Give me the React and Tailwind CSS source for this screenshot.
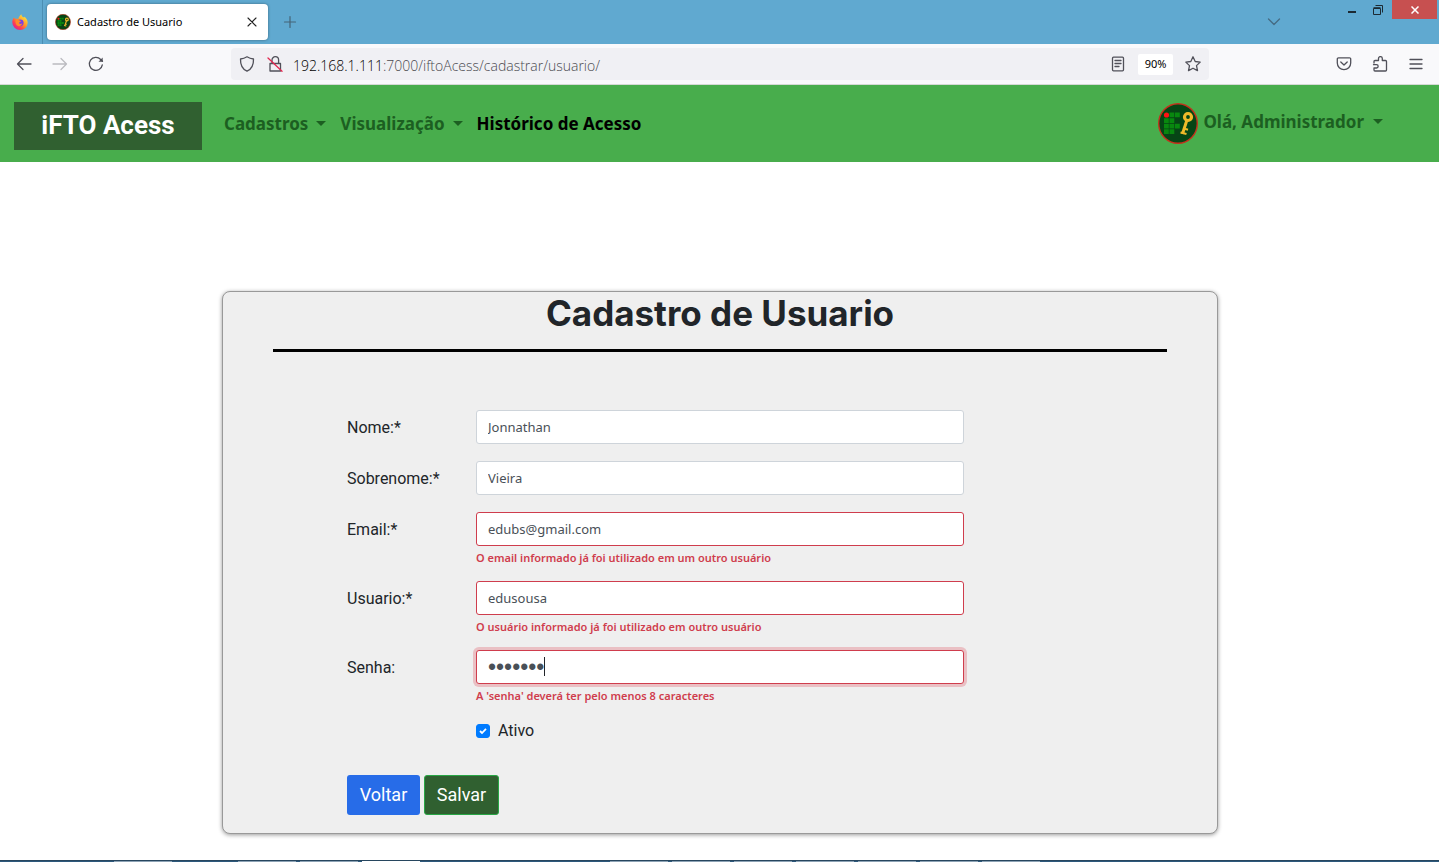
const fields = [
  { id: "nome", label: "Nome:*", value: "Jonnathan", type: "text" },
  { id: "sobrenome", label: "Sobrenome:*", value: "Vieira", type: "text" },
  { id: "email", label: "Email:*", value: "edubs@gmail.com", type: "email", error: "O email informado já foi utilizado em um outro usuário" },
  { id: "usuario", label: "Usuario:*", value: "edusousa", type: "text", error: "O usuário informado já foi utilizado em outro usuário" },
  { id: "senha", label: "Senha:", value: "abcdefg", type: "password", error: "A 'senha' deverá ter pelo menos 8 caracteres", focused: true },
];

const taskbar = [
  "w-[114px]",
  "w-[58px] bg-[#8da3b5]",
  "w-[66px]",
  "w-[58px] bg-[#8da3b5]",
  "w-[4px]",
  "w-[58px] bg-[#8da3b5]",
  "w-[4px]",
  "w-[58px] bg-white",
  "w-[190px]",
  "w-[58px] bg-[#8da3b5]",
  "w-[4px]",
  "w-[58px] bg-[#8da3b5]",
  "w-[4px]",
  "w-[58px] bg-[#8da3b5]",
  "w-[4px]",
  "w-[58px] bg-[#8da3b5]",
  "w-[4px]",
  "w-[58px] bg-[#8da3b5]",
  "w-[4px]",
  "w-[58px] bg-[#8da3b5]",
  "w-[4px]",
  "w-[58px] bg-[#8da3b5]",
];

function Firefox() {
  return (
    <svg className="size-4" viewBox="0 0 16 16" aria-hidden="true">
      <defs>
        <linearGradient id="flame" x1="0.85" y1="0.1" x2="0.2" y2="0.9">
          <stop offset="0" stopColor="#ffe83f" />
          <stop offset="0.45" stopColor="#ff9828" />
          <stop offset="0.75" stopColor="#ff4150" />
          <stop offset="1" stopColor="#e3258a" />
        </linearGradient>
      </defs>
      <path d="M9.3.3c.1 1.5.9 2.2 2 3 .6-.1.9 0 1.2.3-.1-.5-.2-.8-.3-1.1 2 1.3 3.5 3.7 3.5 6.3A7.700 7.400 0 0 1 8 16 7.700 7.400 0 0 1 .3 8.500c0-2 .6-3.700 1.600-4.900l.3 1.100c.4-.5.700-.8.900-.9l.4 1.200c1-.3 2-.2 2.700.2C6.600 3.200 8 1.700 9.300.3Z" fill="url(#flame)" />
      <circle cx="8.2" cy="8.8" r="3.4" fill="#7b3fe4" />
      <path d="M3.500 6.200c1-.9 2.500-.9 3.600 0 .8.6 1.700.5 2.200.9-.5 1-2 1-2.200 1.900.3 1 2 1.300 3.200.3-.4 2.200-2.400 3.400-4.300 2.700-2-.8-3-3.300-2.500-5.800Z" fill="#ff8a2a" />
    </svg>
  );
}

function Emblem({ className }) {
  return (
    <svg className={className} viewBox="0 0 40 41" aria-hidden="true">
      <ellipse cx="20" cy="20.5" rx="19.3" ry="19.8" fill="#064515" stroke="#c5301c" strokeWidth="1.4" />
      <path
        d="M11.500 9.500h4.800v4.700h-4.800zM17 9.500h4.800v4.700H17zM6 15.200h4.800v4.700H6zM11.500 15.200h4.800v4.700h-4.800zM6 20.700h4.800v4.700H6zM11.500 20.700h4.800v4.700h-4.800zM17 20.700h4.800v4.700H17zM6 26.300h4.800V31H6zM11.500 26.300h4.800V31h-4.800z"
        fill="#08880f"
      />
      <circle cx="8.5" cy="12" r="2.6" fill="#ff1212" />
      <g fill="none" stroke="#f0b92a">
        <circle cx="30" cy="14" r="3.5" strokeWidth="3.2" />
        <path d="M28.800 17.500 24.500 30.800" strokeWidth="3" />
        <path d="m26 25.500 4 1.300M22.500 29.500l6 1.500" strokeWidth="2.2" />
      </g>
    </svg>
  );
}

function Icon({ children, className = "size-4 text-[#505059]", width = "1.3" }) {
  return (
    <svg className={className} viewBox="0 0 16 16" fill="none" stroke="currentColor" strokeWidth={width} strokeLinecap="round" strokeLinejoin="round" aria-hidden="true">
      {children}
    </svg>
  );
}

function Caret() {
  return (
    <svg className="h-[5px] w-[10px]" viewBox="0 0 10 5" aria-hidden="true">
      <path d="M0 0h10L5 5Z" fill="currentColor" />
    </svg>
  );
}

function Browser() {
  return (
    <>
      <div className="flex h-11 bg-[#60a9d0]">
        <div className="flex w-[43px] shrink-0 items-center justify-center border-r border-[#4b8eb3] pr-[2px]"><Firefox /></div>
        <div className="my-1 ml-1 flex w-[221px] items-center rounded bg-white px-2 shadow-[0_0_3px_rgba(0,0,0,0.4)]">
          <Emblem className="size-4" />
          <span className="ml-[6px] grow font-['Noto_Sans',sans-serif] text-[11px] text-black">Cadastro de Usuario</span>
          <button aria-label="Fechar aba" className="text-[#222]">
            <Icon className="size-4" width="1.1"><path d="m4 4 8 8M12 4l-8 8" /></Icon>
          </button>
        </div>
        <button aria-label="Nova aba" className="ml-[14px] text-[#456477]">
          <Icon className="size-4" width="1.2"><path d="M8 2.500v11M2.500 8h11" /></Icon>
        </button>
        <div className="ml-auto flex">
          <button aria-label="Listar abas" className="mr-[66px] self-center text-[#456b83]">
            <Icon className="size-4" width="1.3"><path d="m2.500 5 5.500 5.500L13.500 5" /></Icon>
          </button>
          <div className="flex h-[19px] items-center">
            <button aria-label="Minimizar" className="mr-4 flex h-[7px] w-[9px] items-end"><span className="h-[2px] w-2 bg-[#1c2a33]" /></button>
            <button aria-label="Restaurar" className="mr-[9px] text-[#1c2a33]">
              <svg className="size-[10px]" viewBox="0 0 10 10" fill="none" stroke="currentColor" aria-hidden="true"><path d="M.5 3.500h7v6h-7zM.5 2.700h7M2.500.5h7v7" /></svg>
            </button>
            <button aria-label="Fechar janela" className="mr-[2px] flex h-[19px] w-[45px] items-center justify-center bg-[#c75050] text-white">
              <svg className="size-2" viewBox="0 0 8 8" stroke="currentColor" strokeWidth="1.5" aria-hidden="true"><path d="m.5.5 7 7M7.500.5l-7 7" /></svg>
            </button>
          </div>
        </div>
      </div>
      <div className="flex h-[41px] items-center border-b border-[#d5d9d5] bg-[#f9f9fb] pr-[15px] pl-4">
        <div className="flex w-[215px] shrink-0 gap-5">
          <button aria-label="Voltar página"><Icon><path d="M15 8H1.500M7 2.500 1.500 8 7 13.500" /></Icon></button>
          <button aria-label="Avançar página"><Icon className="size-4 text-[#bbbbc0]"><path d="M1 8h13.500M9 2.500 14.500 8 9 13.500" /></Icon></button>
          <button aria-label="Recarregar"><Icon><path d="M14.300 8.800A6.500 6.500 0 1 1 12.700 3.500L14.500 5.300" /><path d="M14.700 1.600v4.200h-4.200Z" fill="currentColor" stroke="none" /></Icon></button>
        </div>
        <div className="flex h-8 max-w-[978px] grow items-center rounded bg-[#f0f0f4] px-2">
          <Icon className="size-4 shrink-0 text-[#505059]"><path d="M8 .8c2 1.200 4 1.900 6.500 2.200.2 5.500-1.500 10-6.500 12.200C3 13 1.300 8.500 1.500 3 4 2.700 6 2 8 .8Z" /></Icon>
          <Icon className="ml-3 size-4 shrink-0 text-[#505059]"><path d="M3 7.500h10.500V15H3ZM5 7.500V4a3.300 3.300 0 0 1 6.600 0v3.500" /><path d="m1 2 14 13.300" stroke="#e22850" /></Icon>
          <div className="relative ml-[10px] grow pt-[2px] font-['Open_Sans',sans-serif] text-[14px] font-light text-[#4a4a50]">
            <p className="whitespace-nowrap"><span className="text-black">192.168.1.111</span>:7000/iftoAcess/cadastrar/usuario/</p>
            <input aria-label="Endereço" className="absolute inset-0 w-full bg-transparent text-transparent outline-none" />
          </div>
          <button aria-label="Modo de leitura"><Icon><path d="M3.500 1.200h9a1 1 0 0 1 1 1v11.600a1 1 0 0 1-1 1h-9a1 1 0 0 1-1-1V2.200a1 1 0 0 1 1-1ZM5 4.500h6M5 7.500h6M5 10.500h4" /></Icon></button>
          <button className="ml-3 h-[21px] w-[35px] rounded-xs bg-white font-['Noto_Sans',sans-serif] text-[11px] text-black">90%</button>
          <button aria-label="Favoritar" className="ml-3"><Icon><path d="m8 .8 2.200 4.700 5 .6-3.700 3.500 1 5L8 12.200l-4.500 2.400 1-5L.8 6.100l5-.6Z" /></Icon></button>
        </div>
        <div className="ml-auto flex gap-5">
          <button aria-label="Pocket"><Icon><path d="M2.500 1.800h11a1.200 1.200 0 0 1 1.200 1.200v4a6.700 6.700 0 0 1-13.400 0V3a1.200 1.200 0 0 1 1.200-1.200ZM4.800 6 8 9l3.200-3" /></Icon></button>
          <button aria-label="Extensões">
            <Icon><path d="M2 7V5.500a1 1 0 0 1 1-1h3.500V2.500a1.900 1.900 0 0 1 3.800 0v2h3.200a1 1 0 0 1 1 1V14a1 1 0 0 1-1 1H3a1 1 0 0 1-1-1v-2h2.500a1.600 1.600 0 0 0 0-3.300H1.500" /></Icon>
          </button>
          <button aria-label="Menu"><Icon><path d="M2 3.500h12M2 8h12M2 12.500h12" /></Icon></button>
        </div>
      </div>
    </>
  );
}

export default function App() {
  return (
    <div className="flex min-h-screen flex-col bg-white">
      <Browser />
      <header className="flex h-[77px] items-center bg-[#48ad4c] pr-14 pl-[14px] font-['Noto_Sans',sans-serif] text-[17px] font-bold text-[#1c5f21]">
        <a href="#inicio" className="mt-1 flex h-12 w-[188px] items-center justify-center bg-[#306030] font-['Roboto',sans-serif] text-[26px] font-bold text-white">iFTO Acess</a>
        <nav className="ml-[22px] flex items-center gap-[14px]">
          <button className="flex items-center gap-2">Cadastros <Caret /></button>
          <button className="flex items-center gap-2">Visualização <Caret /></button>
          <a href="#historico" className="text-black">Histórico de Acesso</a>
        </nav>
        <button className="ml-auto flex items-center">
          <Emblem className="h-[41px] w-10" />
          <span className="mb-1 ml-[5px] flex items-center gap-[9px]">Olá, Administrador <Caret /></span>
        </button>
      </header>
      <main className="grow pt-[129px] pr-[221px] pb-[26px] pl-[222px] font-['Roboto',sans-serif] text-[#212529]">
        <section className="rounded-lg border border-[#999] bg-[#efefef] px-[50px] pb-[18px] shadow-[0_1px_4px_rgba(0,0,0,0.4)]">
          <h1 className="h-[57px] text-center font-['Inter',sans-serif] text-[35px] leading-[43px] font-bold">Cadastro de Usuario</h1>
          <hr className="border-0 border-t-3 border-black" />
          <form className="px-[74px] pt-[58px]" onSubmit={(e) => e.preventDefault()}>
            {fields.map((f) => (
              <div key={f.id} className="mb-[17px] grid grid-cols-[129px_minmax(0,488px)]">
                <label htmlFor={f.id} className="h-[34px] pt-[1px] leading-[34px]">{f.label}</label>
                <div className="relative">
                  <input
                    id={f.id}
                    type={f.type}
                    defaultValue={f.value}
                    className={
                      "peer block h-[34px] w-full rounded-[3px] border bg-white px-[11px] text-[#495057] outline-none " +
                      (f.error ? "border-[#cf3d4d] " : "border-[#ced4da] ") +
                      (f.focused ? "font-['Liberation_Sans',sans-serif] text-[23px] ring-3 ring-[#dc3545]/25" : "font-['Noto_Sans',sans-serif] text-[13px]")
                    }
                  />
                  {f.focused && <span className="pointer-events-none absolute top-[7px] left-[68px] h-[19px] w-px bg-[#212529] peer-focus:hidden" />}
                  {f.error && <p className="mt-1 h-[14px] font-['Noto_Sans',sans-serif] text-[11px] leading-4 font-semibold text-[#cf3d4d]">{f.error}</p>}
                </div>
              </div>
            ))}
            <div className="ml-[129px] flex h-6 items-center gap-2">
              <span className="grid size-[14px] place-items-center">
                <input id="ativo" type="checkbox" defaultChecked className="peer col-start-1 row-start-1 size-[14px] appearance-none rounded-[3px] border border-[#adb5bd] bg-white checked:border-[#007bff] checked:bg-[#007bff]" />
                <svg className="pointer-events-none invisible col-start-1 row-start-1 size-2 text-white peer-checked:visible" viewBox="0 0 8 8" fill="none" stroke="currentColor" strokeWidth="1.8" aria-hidden="true"><path d="m1 4 2 2 4-4.200" /></svg>
              </span>
              <label htmlFor="ativo">Ativo</label>
            </div>
            <div className="mt-8 flex gap-1 text-lg text-white">
              <button type="button" className="h-10 w-[73px] rounded-[3px] bg-[#276ce8]">Voltar</button>
              <button type="submit" className="h-10 w-[75px] rounded-[3px] border border-[#28a745] bg-[#306030]">Salvar</button>
            </div>
          </form>
        </section>
      </main>
      <footer className="flex h-[2px] overflow-hidden border-t border-[#27465f] bg-[#2d597c]">
        {taskbar.map((c, i) => <span key={i} className={"h-px shrink-0 " + c} />)}
      </footer>
    </div>
  );
}
